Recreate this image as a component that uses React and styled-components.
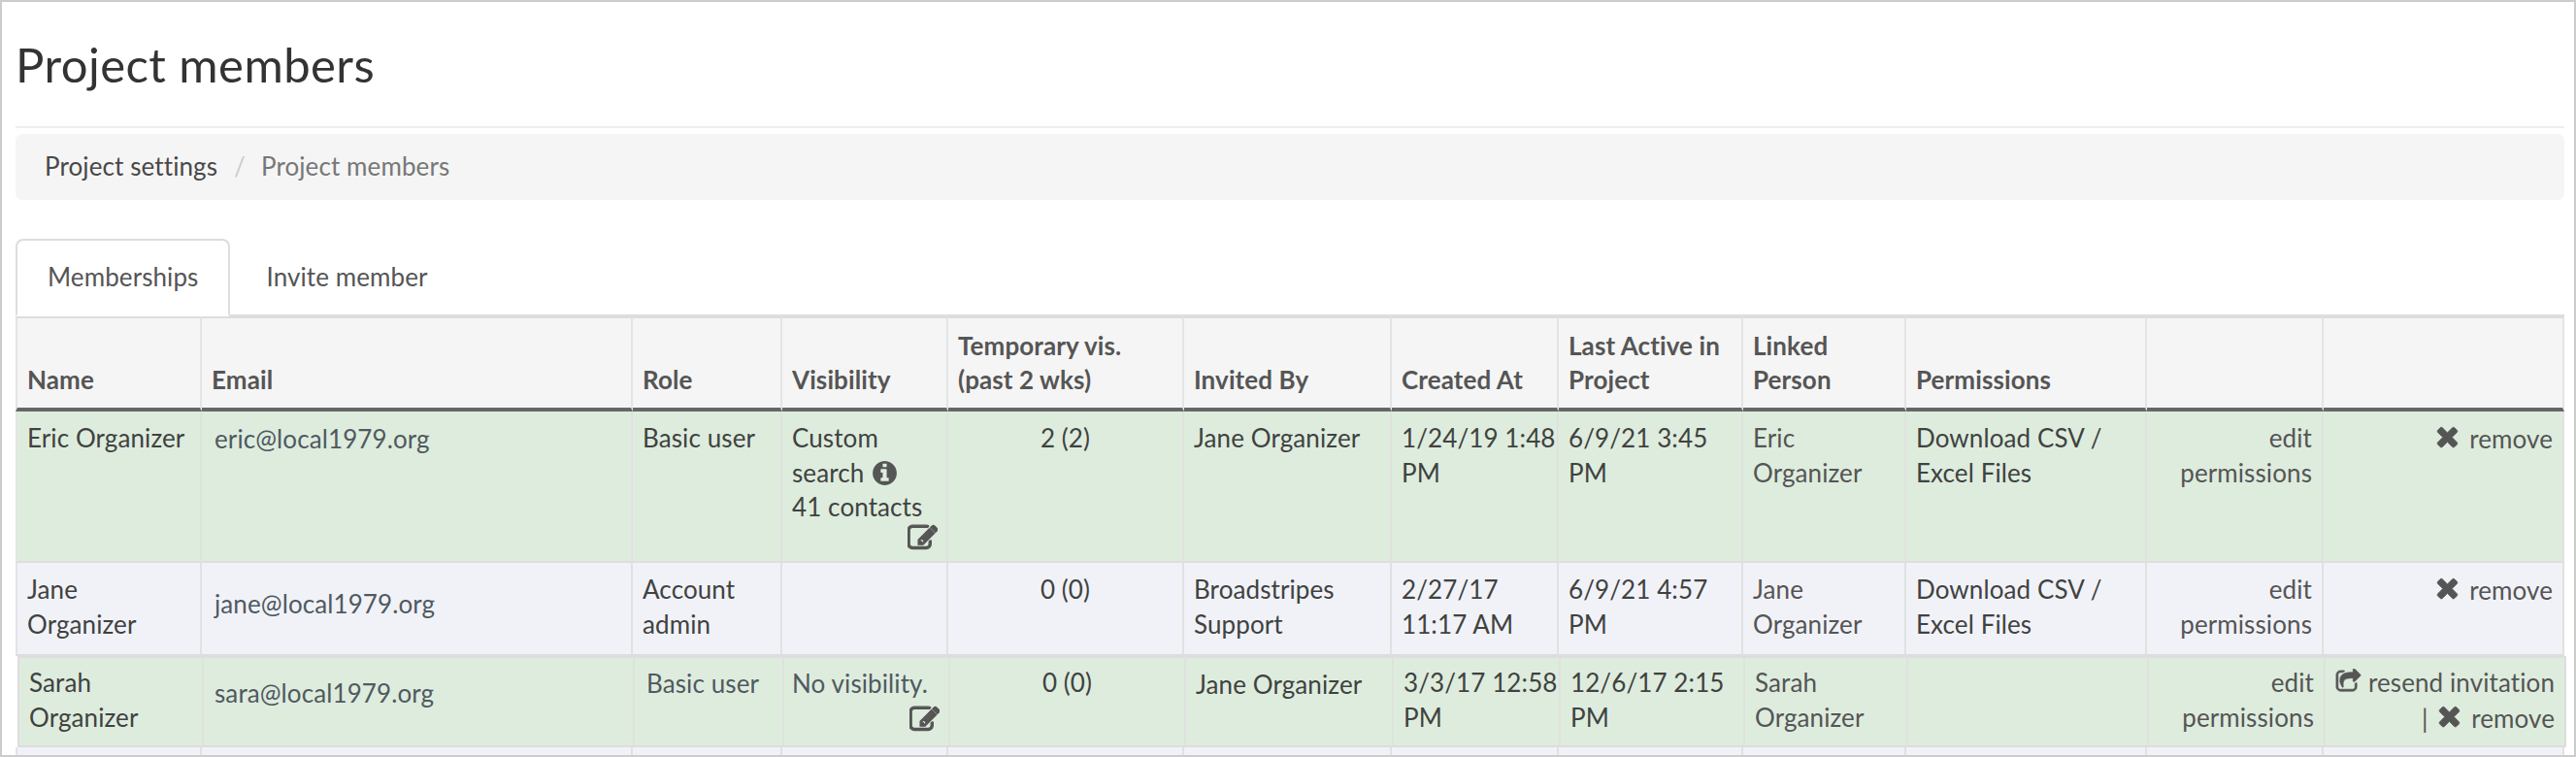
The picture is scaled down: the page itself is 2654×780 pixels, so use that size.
import React from 'react';
import styled, { createGlobalStyle } from 'styled-components';

const Global = createGlobalStyle`
    html, body { margin: 0; padding: 0; background: #fff; }
    body { font-family: Lato, "Open Sans", sans-serif; font-size: 26px; letter-spacing: 0.1px; line-height: 35.7px; color: #333; }
`;
const Frame = styled.div`
    box-sizing: border-box; height: 780px; overflow: hidden;
    border: 2px solid #ccc; padding: 0 10px 0 14px; background: #fff;
`;
const Heading = styled.h1`
    margin: 0; height: 130px; box-sizing: border-box; padding-top: 38px;
    font-size: 49px; line-height: 52px; font-weight: 400; color: #333;
    letter-spacing: 0.45px; border-bottom: 2px solid #eee;
`;
const Breadcrumb = styled.div`
    display: flex; align-items: center; height: 68px; margin-top: 6px;
    padding-left: 30px; background: #f5f5f5; border-radius: 7px;
`;
const Crumb = styled.span`
    color: ${p => (p.$active ? '#777' : '#484848')};
`;
const Slash = styled.span`
    color: #ccc; margin: 0 16px 0 17px;
`;
const Tabs = styled.div`
    display: flex; margin-top: 40px; height: 78px;
    border-bottom: 2px solid #ddd; box-sizing: content-box;
`;
const Tab = styled.div`
    box-sizing: border-box; height: 80px; padding: 20px 31px 0;
    border: 2px solid ${p => (p.$active ? '#ddd' : 'transparent')};
    border-bottom-color: ${p => (p.$active ? '#fff' : 'transparent')};
    border-radius: 8px 8px 0 0; background: ${p => (p.$active ? '#fff' : 'transparent')};
    color: #555; margin-left: ${p => (p.$active ? '0' : '4px')};
    position: relative;
`;
const Table = styled.table`
    table-layout: fixed; width: 2626px; border-collapse: separate; border-spacing: 0;
`;
const Th = styled.th`
    box-sizing: border-box; height: 98px; padding: 0 6px 10px 10px;
    vertical-align: bottom; text-align: left; font-weight: 700; color: #555;
    background: #f5f5f5; border-top: 2px solid #ddd;
    border-right: 2px solid #e4e4e4; border-bottom: 4px solid #666;
    &:first-child { border-left: 2px solid #e4e4e4; }
`;
const Row = styled.tr`
    height: ${p => p.$height}px;
    background: ${p => (p.$green ? '#deecde' : '#f1f2f8')};
    ${p => p.$moved && 'transform: translateX(2px); outline: 2px solid #ddd; outline-offset: -2px;'}
`;
const Td = styled.td`
    box-sizing: border-box; vertical-align: top;
    padding: ${p => p.$top ?? 10}px 10px 0 ${p => p.$left ?? 10}px;
    text-align: ${p => p.$align || 'left'};
    color: ${p => p.$color || '#404240'};
    border-right: 2px solid #dfe2df; border-bottom: 2px solid #ddd;
    &:first-child { border-left: 2px solid #e4e4e4; }
`;
const IconSvg = styled.svg`
    display: inline-block; width: ${p => p.$size}px; height: ${p => p.$size}px;
    vertical-align: ${p => p.$lift ?? -3}px; fill: #555;
`;
const EditLine = styled.div`
    display: flex; justify-content: flex-end; height: 30px; margin: ${p => p.$gap}px -1px 0 0;
`;
const Action = styled.span`
    color: #555; white-space: nowrap;
`;
const NoWrap = styled.span`
    white-space: nowrap;
`;

const TIMES = 'M1490 1322q0 40-28 68l-136 136q-28 28-68 28t-68-28l-294-294-294 294q-28 28-68 28t-68-28l-136-136q-28-28-28-68t28-68l294-294-294-294q-28-28-28-68t28-68l136-136q28-28 68-28t68 28l294 294 294-294q28-28 68-28t68 28l136 136q28 28 28 68t-28 68l-294 294 294 294q28 28 28 68z';
const EDIT = 'M888 1184l116-116-152-152-116 116v56h96v96h56zm440-720q-16-16-33 1l-350 350q-17 17-1 33t33-1l350-350q17-17 1-33zm80 594v190q0 119-84.5 203.5t-203.5 84.5h-832q-119 0-203.5-84.5t-84.5-203.5v-832q0-119 84.5-203.5t203.5-84.5h832q63 0 117 25 15 7 18 23 3 17-9 29l-49 49q-14 14-32 8-23-6-45-6h-832q-66 0-113 47t-47 113v832q0 66 47 113t113 47h832q66 0 113-47t47-113v-126q0-13 9-22l64-64q15-15 35-7t20 29zm-96-738l288 288-672 672h-288v-288zm444 132l-92 92-288-288 92-92q28-28 68-28t68 28l152 152q28 28 28 68t-28 68z';
const INFO = 'M1152 1376v-160q0-14-9-23t-23-9h-96v-512q0-14-9-23t-23-9h-320q-14 0-23 9t-9 23v160q0 14 9 23t23 9h96v320h-96q-14 0-23 9t-9 23v160q0 14 9 23t23 9h448q14 0 23-9t9-23zm-128-896v-160q0-14-9-23t-23-9h-192q-14 0-23 9t-9 23v160q0 14 9 23t23 9h192q14 0 23-9t9-23zm640 416q0 209-103 385.5t-279.5 279.5-385.5 103-385.5-103-279.5-279.5-103-385.5 103-385.5 279.5-279.5 385.5-103 385.5 103 279.5 279.5 103 385.5z';
const SHARE = 'M1472 989v259q0 119-84.5 203.5t-203.5 84.5h-832q-119 0-203.5-84.5t-84.5-203.5v-832q0-119 84.5-203.5t203.5-84.5h255q13 0 22.5 9.5t9.5 22.5q0 27-26 32-77 26-133 60-10 4-16 4h-112q-66 0-113 47t-47 113v832q0 66 47 113t113 47h832q66 0 113-47t47-113v-214q0-19 18-29 28-13 54-37 16-16 35-8 21 9 21 29zm237-496l-384 384q-18 19-45 19-12 0-25-5-39-17-39-59v-192h-160q-323 0-438 131-119 137-74 473 3 23-20 34-8 2-12 2-16 0-26-13-10-14-21-31t-39.5-68.5-49.5-99.5-38.5-114-17.5-122q0-49 3.5-91t14-90 28-88 47-81.5 68.5-74 94.5-61.5 124.5-48.5 159.5-30.5 196.5-11h160v-192q0-42 39-59 13-5 25-5 26 0 45 19l384 384q19 19 19 45t-19 45z';

const Icon = ({ d, size, lift, weight = 50 }) => (
    <IconSvg viewBox="0 0 1792 1792" $size={size} $lift={lift}><path d={d} stroke="#555" strokeWidth={weight} /></IconSvg>
);

const COLUMNS = [192, 444, 154, 171, 243, 214, 172, 190, 168, 248, 182, 248];
const HEADERS = ['Name', 'Email', 'Role', 'Visibility', <>Temporary vis.<br />(past 2 wks)</>, 'Invited By', 'Created At',
    'Last Active in Project', 'Linked Person', 'Permissions', '', ''];

const GREY = '#4f5a5f';
const SOFT = '#555';

const Remove = () => <Action><Icon d={TIMES} size={31} lift={-3} /> remove</Action>;
const EditIcon = ({ gap }) => <EditLine $gap={gap}><Icon d={EDIT} size={31} lift={0} weight={70} /></EditLine>;

export default function App() {
    return (
        <Frame>
            <Global />
            <Heading>Project members</Heading>
            <Breadcrumb>
                <Crumb>Project settings</Crumb>
                <Slash>/</Slash>
                <Crumb $active>Project members</Crumb>
            </Breadcrumb>
            <Tabs>
                <Tab $active>Memberships</Tab>
                <Tab>Invite member</Tab>
            </Tabs>
            <Table>
                <colgroup>
                    {COLUMNS.map((w, i) => <col key={i} width={w} />)}
                </colgroup>
                <thead>
                    <tr>{HEADERS.map((h, i) => <Th key={i}>{h}</Th>)}</tr>
                </thead>
                <tbody>
                    <Row $green $height={156}>
                        <Td><NoWrap>Eric Organizer</NoWrap></Td>
                        <Td $top={11} $left={13} $color={GREY}>eric@local1979.org</Td>
                        <Td>Basic user</Td>
                        <Td>
                            Custom<br />
                            search <Icon d={INFO} size={29} lift={-5} weight={0} /><br />
                            41 contacts
                            <EditIcon gap={-2} />
                        </Td>
                        <Td $align="center">2 (2)</Td>
                        <Td>Jane Organizer</Td>
                        <Td><NoWrap>1/24/19 1:48</NoWrap><br />PM</Td>
                        <Td>6/9/21 3:45 PM</Td>
                        <Td $color={SOFT}>Eric Organizer</Td>
                        <Td>Download CSV /<br />Excel Files</Td>
                        <Td $align="right" $color={SOFT}>edit permissions</Td>
                        <Td $align="right"><Remove /></Td>
                    </Row>
                    <Row $height={96}>
                        <Td>Jane<br />Organizer</Td>
                        <Td $top={25} $left={13} $color={GREY}>jane@local1979.org</Td>
                        <Td>Account admin</Td>
                        <Td />
                        <Td $align="center">0 (0)</Td>
                        <Td>Broadstripes Support</Td>
                        <Td>2/27/17<br />11:17 AM</Td>
                        <Td>6/9/21 4:57 PM</Td>
                        <Td $color={SOFT}>Jane Organizer</Td>
                        <Td>Download CSV /<br />Excel Files</Td>
                        <Td $align="right" $color={SOFT}>edit permissions</Td>
                        <Td $align="right"><Remove /></Td>
                    </Row>
                    <Row $green $moved $height={94}>
                        <Td>Sarah Organizer</Td>
                        <Td $top={21} $left={11} $color={GREY}>sara@local1979.org</Td>
                        <Td $top={11} $left={12} $color={GREY}>Basic user</Td>
                        <Td $color={GREY} $top={11} $left={8}>
                            <NoWrap>No visibility.</NoWrap>
                            <EditIcon gap={3} />
                        </Td>
                        <Td $align="center">0 (0)</Td>
                        <Td $top={12}>Jane Organizer</Td>
                        <Td><NoWrap>3/3/17 12:58</NoWrap><br />PM</Td>
                        <Td>12/6/17 2:15 PM</Td>
                        <Td $color={SOFT}>Sarah Organizer</Td>
                        <Td />
                        <Td $align="right" $color={SOFT}>edit permissions</Td>
                        <Td $align="right" $left={6}>
                            <Action><Icon d={SHARE} size={27} /> resend invitation</Action><br />
                            <Action>| <Icon d={TIMES} size={31} lift={-3} /> remove</Action>
                        </Td>
                    </Row>
                    <Row $height={20}>
                        {COLUMNS.map((w, i) => <Td key={i} />)}
                    </Row>
                </tbody>
            </Table>
        </Frame>
    );
}
